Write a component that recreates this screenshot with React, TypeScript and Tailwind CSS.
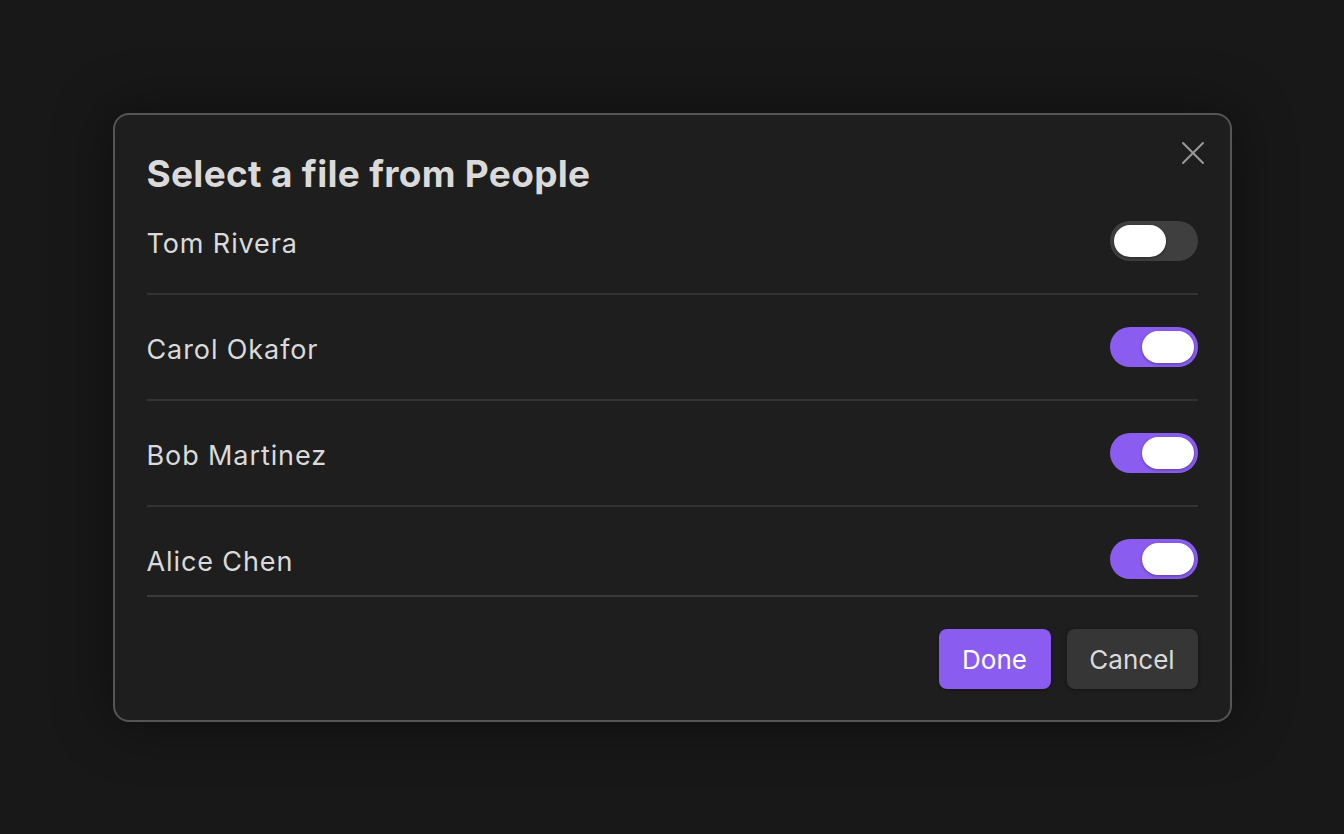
import {useState} from 'react';

type Person = {name: string, on: boolean};

const people: Person[] = [
    {name: 'Tom Rivera', on: false},
    {name: 'Carol Okafor', on: true},
    {name: 'Bob Martinez', on: true},
    {name: 'Alice Chen', on: true},
];

function Toggle({on, onClick}: {on: boolean, onClick: () => void}) {
    return (
        <button
            type="button"
            onClick={onClick}
            className={`flex h-[40px] w-[88px] shrink-0 items-center rounded-full p-[4px] ${on ? 'justify-end bg-[#8a5cf0]' : 'justify-start bg-[#3f3f3f]'}`}
        >
            <span className="block h-[32px] w-[52px] rounded-full bg-white shadow-[0_1px_3px_rgba(0,0,0,0.35)]"/>
        </button>
    );
}

export default function App() {
    const [items, setItems] = useState(people);

    const flip = (i: number) => {
        setItems(items.map((p, j) => j === i ? {...p, on: !p.on} : p));
    };

    const rowPadding = ['pt-[28px] pb-[32px]', 'py-[32px]', 'py-[32px]', 'pt-[32px] pb-[16px]'];

    return (
        <div className="flex h-[834px] w-full items-start justify-center bg-[#181818] pt-[113px]"
             style={{fontFamily: 'Inter, "Noto Sans", sans-serif'}}>
            <div className="relative w-[1119px] rounded-[16px] border-2 border-[#555555] bg-[#1e1e1e] px-[32px] pt-[39px] pb-[31px] shadow-[0_0_60px_rgba(0,0,0,0.45)]">
                <button type="button" className="absolute right-[23px] top-[24px] p-[2px] text-[#9a9a9a]">
                    <svg width="24" height="24" viewBox="0 0 24 24" fill="none" stroke="currentColor" strokeWidth="2"
                         strokeLinecap="round">
                        <path d="M2 2 L22 22 M22 2 L2 22"/>
                    </svg>
                </button>

                <h2 className="text-[37px] font-bold leading-[39px] tracking-[0.3px] text-[#dadada]">
                    Select a file from People
                </h2>

                <div>
                    {items.map((p, i) => (
                        <div key={p.name}
                             className={`flex h-auto items-center justify-between border-b-2 ${i === items.length - 1 ? 'border-[#3a3a3a]' : 'border-[#333333]'} ${rowPadding[i]}`}>
                            <span className="h-[40px] pt-[6px] text-[27px] leading-[34px] tracking-[0.9px] text-[#dadada]">{p.name}</span>
                            <Toggle on={p.on} onClick={() => flip(i)}/>
                        </div>
                    ))}
                </div>

                <div className="mt-[32px] flex justify-end gap-[16px]">
                    <button type="button"
                            className="h-[60px] w-[112px] rounded-[8px] bg-[#8a5cf0] text-[26px] text-white shadow-[0_1px_3px_rgba(0,0,0,0.3)]">
                        Done
                    </button>
                    <button type="button"
                            className="h-[60px] w-[131px] rounded-[8px] bg-[#363636] text-[26px] text-[#dadada] shadow-[0_1px_4px_rgba(0,0,0,0.4)]">
                        Cancel
                    </button>
                </div>
            </div>
        </div>
    );
}
